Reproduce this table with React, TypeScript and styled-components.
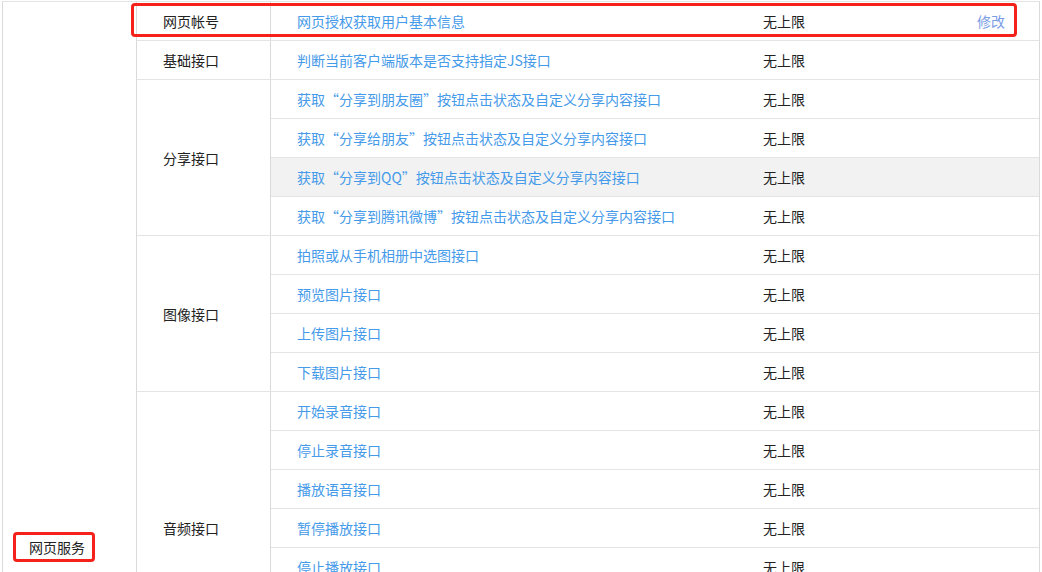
import React from "react";
import styled, { createGlobalStyle } from "styled-components";

const GlobalStyle = createGlobalStyle`
  html, body { margin: 0; padding: 0; background: #fff; overflow: hidden; }
  body { font-family: "Noto Sans CJK SC", "Noto Sans", sans-serif; font-size: 14px; color: #222; }
`;

const Page = styled.div`
  padding: 1px 0 0 2px;
`;

const Table = styled.div`
  display: flex;
  width: 1038px;
  box-sizing: border-box;
  border-left: 1px solid #dadada;
  border-right: 1px solid #dadada;
  border-top: 1px solid #e4e4e4;
`;

const ServiceCell = styled.div`
  width: 134px;
  flex: none;
  box-sizing: border-box;
  border-right: 1px solid #dadada;
  display: flex;
  align-items: flex-end;
  padding: 0 0 102px 10px;
`;

const Label = styled.span<{ $marked?: boolean }>`
  display: inline-block;
  line-height: 24px;
  padding: 0 7px 0 13px;
  border: 3px solid ${(p) => (p.$marked ? "#f5221b" : "transparent")};
  border-radius: 4px;
`;

const Groups = styled.div`
  flex: 1;
  display: flex;
  flex-direction: column;
`;

const Group = styled.div`
  display: flex;
  position: relative;
  border-bottom: 1px solid #e4e4e4;
  &:last-child { border-bottom: none; }
`;

const GroupName = styled.div`
  width: 134px;
  flex: none;
  box-sizing: border-box;
  border-right: 1px solid #dadada;
  display: flex;
  align-items: center;
  padding-left: 26px;
`;

const Rows = styled.div`
  flex: 1;
  display: flex;
  flex-direction: column;
`;

const Row = styled.div<{ $hover?: boolean }>`
  display: grid;
  grid-template-columns: 466px 214px 1fr;
  height: 38px;
  align-items: center;
  background: ${(p) => (p.$hover ? "#f2f2f2" : "transparent")};
  border-bottom: 1px solid #e4e4e4;
  &:last-child { border-bottom: none; }
`;

const Cell = styled.div`
  padding-left: 26px;
  white-space: nowrap;
`;

const ApiLink = styled(Cell)`
  color: #459ae9;
`;

const Action = styled(Cell)`
  color: #7a9de6;
`;

const Highlight = styled.div`
  position: absolute;
  left: -6px;
  top: 1px;
  width: 886px;
  height: 34px;
  box-sizing: border-box;
  border: 3px solid #f5221b;
  border-radius: 4px;
  pointer-events: none;
`;

type Api = { name: string; action?: string; hover?: boolean };
type G = { title: string; apis: Api[]; marked?: boolean };

const groups: G[] = [
  { title: "网页帐号", marked: true, apis: [{ name: "网页授权获取用户基本信息", action: "修改" }] },
  { title: "基础接口", apis: [{ name: "判断当前客户端版本是否支持指定JS接口" }] },
  {
    title: "分享接口",
    apis: [
      { name: "获取“分享到朋友圈”按钮点击状态及自定义分享内容接口" },
      { name: "获取“分享给朋友”按钮点击状态及自定义分享内容接口" },
      { name: "获取“分享到QQ”按钮点击状态及自定义分享内容接口", hover: true },
      { name: "获取“分享到腾讯微博”按钮点击状态及自定义分享内容接口" },
    ],
  },
  {
    title: "图像接口",
    apis: [
      { name: "拍照或从手机相册中选图接口" },
      { name: "预览图片接口" },
      { name: "上传图片接口" },
      { name: "下载图片接口" },
    ],
  },
  {
    title: "音频接口",
    apis: [
      { name: "开始录音接口" },
      { name: "停止录音接口" },
      { name: "播放语音接口" },
      { name: "暂停播放接口" },
      { name: "停止播放接口" },
      { name: "上传语音接口" },
      { name: "下载语音接口" },
    ],
  },
];

export default function App() {
  return (
    <Page>
      <GlobalStyle />
      <Table>
        <ServiceCell>
          <Label $marked>网页服务</Label>
        </ServiceCell>
        <Groups>
          {groups.map((g) => (
            <Group key={g.title}>
              <GroupName>{g.title}</GroupName>
              <Rows>
                {g.apis.map((a) => (
                  <Row key={a.name} $hover={a.hover}>
                    <ApiLink>{a.name}</ApiLink>
                    <Cell>无上限</Cell>
                    <Action>{a.action ?? ""}</Action>
                  </Row>
                ))}
              </Rows>
              {g.marked && <Highlight />}
            </Group>
          ))}
        </Groups>
      </Table>
    </Page>
  );
}
